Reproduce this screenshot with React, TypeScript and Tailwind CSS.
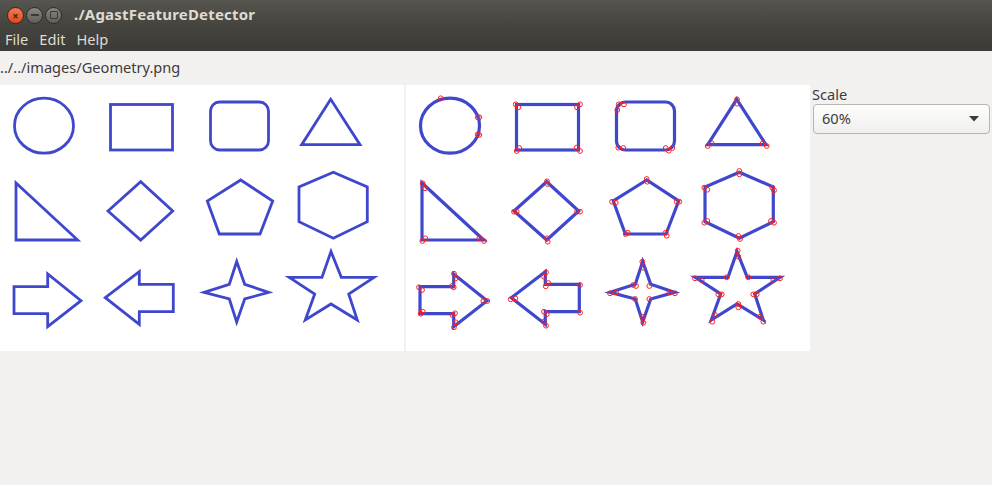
import React from "react";

const BLUE = "#3f48cc";

type P = [number, number][];
const pts = (p: P) => p.map(([x, y]) => `${x},${y}`).join(" ");

const polys: P[] = [
  [[330.7, 14.3], [301.7, 59.7], [360, 59.7]],
  [[16, 98], [16, 155], [77.7, 155]],
  [[108, 126], [140.7, 96.7], [172.7, 126], [140.7, 155]],
  [[240.7, 95], [207.3, 116], [219.3, 149], [260, 149], [272.7, 116]],
  [[333.3, 87.3], [299, 102], [299, 136.7], [333.3, 153.3], [367.3, 136.7], [367.3, 102]],
  [[14, 201.7], [47.7, 201.7], [47.7, 189], [81, 215.7], [47.7, 241.7], [47.7, 228.7], [14, 228.7]],
  [[105.3, 212.7], [139.3, 186.7], [139.3, 199.3], [173.3, 199.3], [173.3, 226.7], [139.3, 226.7], [139.3, 239.3]],
  [[236.7, 176.5], [244.7, 199.3], [268.7, 207.3], [244.7, 214], [236.7, 237], [229.3, 214], [204, 207.3], [229.3, 199.3]],
  [[331, 166.5], [341.3, 192.3], [374, 192.3], [348.7, 209], [357.3, 235], [331, 219], [305.3, 235], [314.7, 209], [289.3, 192.3], [322, 192.3]],
];

const keypoints: P = [
  [34.7, 13.3], [71.7, 32.3], [73.3, 32.3], [71.7, 49.3], [73.3, 50],
  [109.7, 19.3], [112.3, 22.3], [174, 19.3], [171, 22.3], [113.3, 63], [110.7, 66], [170.7, 62.7], [174, 66],
  [212.7, 19.3], [218, 19.3], [211.3, 25], [212.3, 62.7], [217.3, 63], [259.7, 63], [262.7, 65.7], [266.3, 63],
  [331, 14.3], [331.3, 18.7], [305.7, 58.3], [301.7, 61], [356.7, 58.3], [360.7, 61],
  [16.7, 98.3], [19, 103.3], [16.3, 156], [19.3, 153.3], [73.3, 153.3], [78, 156],
  [141, 96.3], [141.7, 99], [108, 126.7], [110.7, 126.7], [171, 126.7], [174, 126.7], [141, 153.3], [141.7, 156.7],
  [240.7, 94], [241.3, 96.7], [206, 116.7], [209.7, 117.7], [270.7, 116.7], [273.3, 116.7], [219.7, 149], [221.7, 147.7], [259.7, 147.7], [260.7, 150.7],
  [333.3, 86], [333.3, 89.3], [298.3, 102.7], [301.3, 104.7], [366.3, 102.7], [368, 105.3], [298.3, 137.7], [301.3, 136], [365, 136], [368, 137.7], [332.3, 151], [334, 154],
  [13, 202.3], [16, 205], [46, 201], [47.7, 202.3], [48, 188.7], [49.7, 193.3], [77.3, 216], [81.3, 216], [14.7, 228.7], [16.7, 226.7], [46.3, 230], [49, 228.3], [49.7, 237.3], [48, 242.3],
  [140, 187.3], [138, 191.7], [139.7, 201.3], [142.3, 198], [174, 200], [104.7, 214.3], [109.3, 213.3], [138, 226.7], [140.7, 229.3], [174, 227.7], [138, 236.7], [140, 240.7],
  [236.3, 176.7], [237.3, 182.7], [227.3, 200], [230, 201], [243.3, 201], [204, 208.3], [210, 207.3], [263.3, 207.3], [269, 208.3], [229, 214], [243.3, 214], [236.7, 231.7], [237.3, 237.7],
  [331.7, 165.7], [332.3, 171.7], [289, 193.3], [295.7, 195], [320.7, 192.3], [342.3, 192.3], [367.3, 195], [374, 193.3], [312.3, 209.3], [315.7, 209.3], [347.3, 209.3], [350.7, 209.3], [332.3, 219], [332.3, 222.3], [309, 230], [306.3, 236.7], [354, 231.7], [357.3, 236.7],
];

function Shapes({ kp }: { kp?: boolean }) {
  return (
    <svg width="404" height="266" viewBox="0 0 404 266" className="block">
      <g fill="none" stroke={BLUE} strokeWidth={kp ? 3.2 : 2.8} strokeLinejoin="miter">
        <ellipse cx="44" cy="40.7" rx="29.5" ry="27.5" />
        <rect x="110.5" y="19.5" width="62" height="45.5" />
        <rect x="210.5" y="17" width="58" height="48" rx="9" />
        {polys.map((p, i) => (
          <polygon key={i} points={pts(p)} />
        ))}
      </g>
      {kp && (
        <g fill="none" stroke="#ff2020" strokeWidth="1">
          {keypoints.map(([x, y], i) => (
            <circle key={i} cx={x} cy={y} r="2.4" />
          ))}
        </g>
      )}
    </svg>
  );
}

export default function App() {
  const font = { fontFamily: '"Noto Sans", "Open Sans", sans-serif' };
  return (
    <div className="w-[992px] h-[485px] bg-[#f2f1f0] overflow-hidden flex flex-col" style={font}>
      <div className="h-[51px] bg-gradient-to-b from-[#57554f] via-[#45443f] to-[#3b3a36] flex flex-col">
        <div className="h-[29px] flex items-center">
          <div className="flex items-center gap-[2px] pl-[7px] pt-[1px]">
            <div className="w-[17px] h-[17px] rounded-full bg-gradient-to-b from-[#f37a50] to-[#e0491b] flex items-center justify-center border border-[#3a2a22]">
              <span className="text-[#3b2016] text-[11px] leading-none font-bold">×</span>
            </div>
            <div className="w-[17px] h-[17px] rounded-full bg-gradient-to-b from-[#8a8882] to-[#5f5d58] flex items-center justify-center border border-[#2e2d2a]">
              <div className="w-[8px] h-[2px] bg-[#3a3935]" />
            </div>
            <div className="w-[17px] h-[17px] rounded-full bg-gradient-to-b from-[#8a8882] to-[#5f5d58] flex items-center justify-center border border-[#2e2d2a]">
              <div className="w-[8px] h-[8px] border-[1.5px] border-[#3a3935] rounded-[1px]" />
            </div>
          </div>
          <div className="ml-[12px] text-[#dfdbd2] text-[15px] tracking-[0.2px] font-bold">./AgastFeatureDetector</div>
        </div>
        <div className="h-[22px] flex items-center text-[#dfdbd2] text-[14.6px] pl-[5px] gap-[11px]">
          <span>File</span>
          <span>Edit</span>
          <span>Help</span>
        </div>
      </div>
      <div className="flex">
        <div className="flex flex-col">
          <div className="h-[34px] flex items-center text-[14.6px] text-[#3c3c3c]">../../images/Geometry.png</div>
          <div className="flex gap-[2px]">
            <div className="bg-white w-[404px] h-[266px]">
              <Shapes />
            </div>
            <div className="bg-white w-[404px] h-[266px]">
              <Shapes kp />
            </div>
          </div>
        </div>
        <div className="flex flex-col pl-[2px] pt-[34px]">
          <div className="text-[14.6px] text-[#3c3c3c] leading-[18px]">Scale</div>
          <div className="mt-[1px] ml-[1px] w-[177px] h-[30px] rounded-[4px] border border-[#b8b5b0] bg-gradient-to-b from-[#fdfdfc] to-[#f0efee] flex items-center justify-between px-[8px] text-[14.6px] text-[#3c3c3c]">
            <span>60%</span>
            <svg width="10" height="6" viewBox="0 0 10 6" className="mr-[2px]">
              <polygon points="0,0 10,0 5,5.5" fill="#3c3c3c" />
            </svg>
          </div>
        </div>
      </div>
    </div>
  );
}
